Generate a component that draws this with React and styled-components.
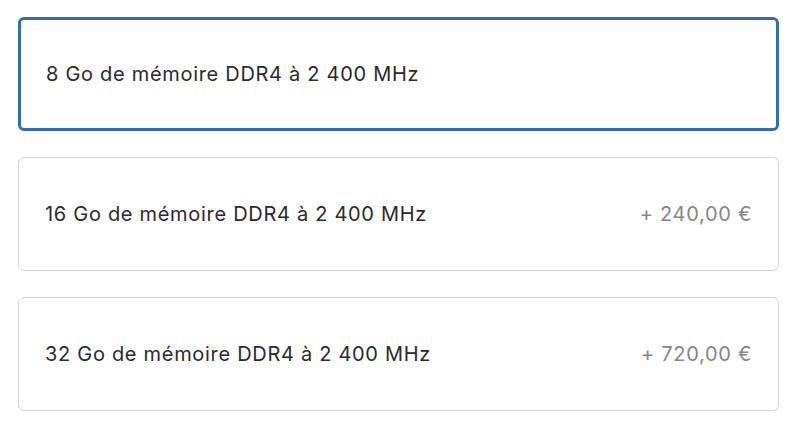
import React from 'react';
import styled, { createGlobalStyle } from 'styled-components';

const Global = createGlobalStyle`
  body {
    margin: 0;
    background: #fff;
    font-family: Inter, "Liberation Sans", sans-serif;
  }
`;

const List = styled.div`
  display: flex;
  flex-direction: column;
  gap: 26px;
  padding: 17px 21px 0 18px;
`;

const Option = styled.div`
  box-sizing: border-box;
  height: 114px;
  display: flex;
  align-items: center;
  justify-content: space-between;
  padding: 0 ${(p) => (p.selected ? 25 : 26)}px 0 ${(p) => (p.selected ? 25 : 26)}px;
  border: ${(p) => (p.selected ? '3px solid #316cb4' : '1px solid #d4d4d6')};
  border-radius: 6px;
  background: #fff;
`;

const Label = styled.span`
  font-size: 20px;
  color: #2a2a2c;
  letter-spacing: 0.7px;
`;

const Price = styled.span`
  font-size: 20px;
  color: #86868b;
  letter-spacing: 0.7px;
`;

const options = [
  { label: '8 Go de mémoire DDR4 à 2 400 MHz', selected: true },
  { label: '16 Go de mémoire DDR4 à 2 400 MHz', price: '+ 240,00 €' },
  { label: '32 Go de mémoire DDR4 à 2 400 MHz', price: '+ 720,00 €' },
];

export default function App() {
  return (
    <>
      <Global />
      <List>
        {options.map((o) => (
          <Option key={o.label} selected={o.selected}>
            <Label>{o.label}</Label>
            {o.price && <Price>{o.price}</Price>}
          </Option>
        ))}
      </List>
    </>
  );
}
